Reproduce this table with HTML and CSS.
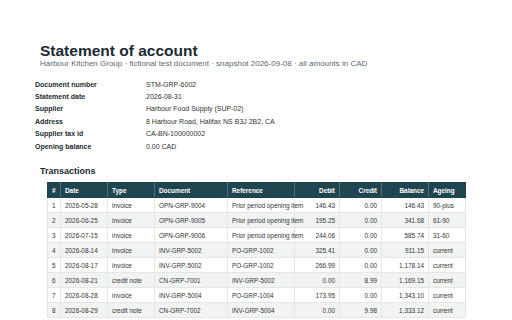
FILE: index.html
```html
<!DOCTYPE html>
<html>
<head>
<meta charset="utf-8">
<link rel="stylesheet" href="styles.css">
</head>
<body>
<div class="page">
  <header class="head">
    <h1 class="title">Statement of account</h1>
    <div class="sub">Harbour Kitchen Group · fictional test document · snapshot 2026-09-08 · all amounts in CAD</div>
  </header>
  <dl class="meta">
    <dt>Document number</dt><dd>STM-GRP-6002</dd>
    <dt>Statement date</dt><dd>2026-08-31</dd>
    <dt>Supplier</dt><dd>Harbour Food Supply (SUP-02)</dd>
    <dt>Address</dt><dd>8 Harbour Road, Halifax NS B3J 2B2, CA</dd>
    <dt>Supplier tax id</dt><dd>CA-BN-100000002</dd>
    <dt>Opening balance</dt><dd>0.00 CAD</dd>
  </dl>
  <h2 class="section">Transactions</h2>
  <table class="tx">
    <colgroup>
      <col class="c-n"><col class="c-date"><col class="c-type"><col class="c-doc"><col class="c-ref"><col class="c-deb"><col class="c-cred"><col class="c-bal"><col class="c-age">
    </colgroup>
    <thead>
      <tr><th>#</th><th>Date</th><th>Type</th><th>Document</th><th>Reference</th><th class="num">Debit</th><th class="num">Credit</th><th class="num">Balance</th><th>Ageing</th></tr>
    </thead>
    <tbody>
      <tr><td>1</td><td>2026-05-28</td><td>invoice</td><td>OPN-GRP-9004</td><td>Prior period opening item</td><td class="num">146.43</td><td class="num">0.00</td><td class="num">146.43</td><td>90-plus</td></tr>
      <tr><td>2</td><td>2026-06-25</td><td>invoice</td><td>OPN-GRP-9005</td><td>Prior period opening item</td><td class="num">195.25</td><td class="num">0.00</td><td class="num">341.68</td><td>61-90</td></tr>
      <tr><td>3</td><td>2026-07-15</td><td>invoice</td><td>OPN-GRP-9006</td><td>Prior period opening item</td><td class="num">244.06</td><td class="num">0.00</td><td class="num">585.74</td><td>31-60</td></tr>
      <tr><td>4</td><td>2026-08-14</td><td>invoice</td><td>INV-GRP-5002</td><td>PO-GRP-1002</td><td class="num">325.41</td><td class="num">0.00</td><td class="num">911.15</td><td>current</td></tr>
      <tr><td>5</td><td>2026-08-17</td><td>invoice</td><td>INV-GRP-5002</td><td>PO-GRP-1002</td><td class="num">266.99</td><td class="num">0.00</td><td class="num">1,178.14</td><td>current</td></tr>
      <tr><td>6</td><td>2026-08-21</td><td>credit note</td><td>CN-GRP-7001</td><td>INV-GRP-5002</td><td class="num">0.00</td><td class="num">8.99</td><td class="num">1,169.15</td><td>current</td></tr>
      <tr><td>7</td><td>2026-08-28</td><td>invoice</td><td>INV-GRP-5004</td><td>PO-GRP-1004</td><td class="num">173.95</td><td class="num">0.00</td><td class="num">1,343.10</td><td>current</td></tr>
      <tr><td>8</td><td>2026-08-29</td><td>credit note</td><td>CN-GRP-7002</td><td>INV-GRP-5004</td><td class="num">0.00</td><td class="num">9.98</td><td class="num">1,333.12</td><td>current</td></tr>
    </tbody>
  </table>
</div>
</body>
</html>
```
FILE: styles.css
```css
html, body { margin: 0; padding: 0; background: #fff; }
body { font-family: "Liberation Sans", Arial, sans-serif; color: #222; }
.page { padding: 42px 0 0 40px; }
.head { margin: 0; }
.title { margin: 0; font-size: 15.5px; line-height: 17px; font-weight: bold; color: #1b2a33; }
.sub { font-size: 8px; line-height: 10px; color: #5c6870; }
.meta { display: grid; grid-template-columns: 111px auto; margin: 9.6px 0 0 -5px; }
.meta dt { font-weight: bold; font-size: 7px; line-height: 12.4px; color: #222c32; margin: 0; }
.meta dd { font-size: 7px; line-height: 12.4px; color: #333; margin: 0; }
.section { font-size: 9px; line-height: 11px; font-weight: bold; color: #1b2a33; margin: 13.4px 0 4.6px 0; }
.tx { border-collapse: collapse; table-layout: fixed; width: 418px; margin-left: 7px; font-size: 6.4px; }
.c-n { width: 13px; }
.c-date { width: 47px; }
.c-type { width: 47px; }
.c-doc { width: 73px; }
.c-ref { width: 67px; }
.c-deb { width: 45px; }
.c-cred { width: 42px; }
.c-bal { width: 47px; }
.c-age { width: 37px; }
.tx tr { height: 15px; }
.tx th, .tx td { padding: 0 4px; white-space: nowrap; overflow: visible; text-align: left; }
.tx th { background: #1e4550; color: #fff; font-weight: bold; border: 1px solid #4f6f78; border-top-color: #1e4550; border-bottom-color: #1e4550; }
.tx th:first-child { border-left-color: #1e4550; }
.tx th:last-child { border-right-color: #1e4550; }
.tx td { border: 1px solid #e4e7e6; color: #333; }
.tx tbody tr:nth-child(even) td { background: #f2f4f3; }
.tx .num { text-align: right; }
```
